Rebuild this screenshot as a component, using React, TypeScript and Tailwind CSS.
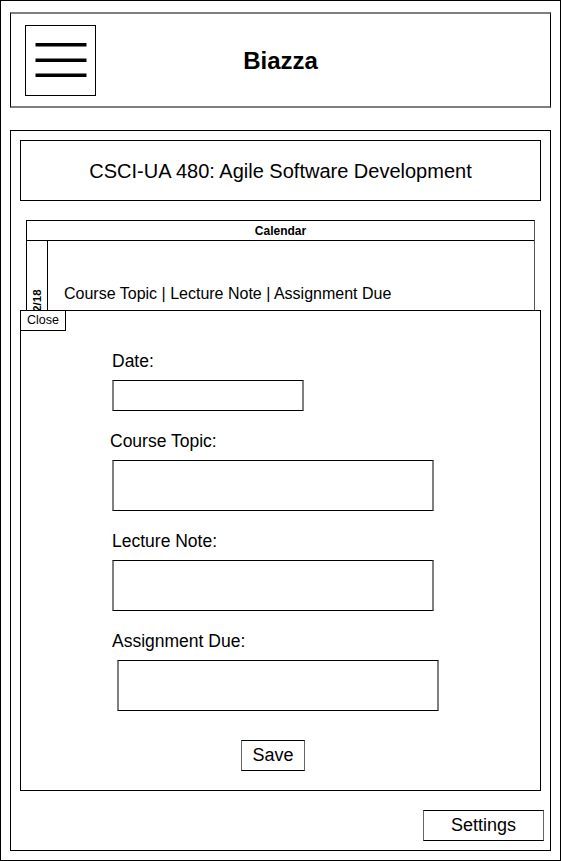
import React, { useState } from "react";

const font = { fontFamily: '"Liberation Sans", Arial, sans-serif' };

const Field = ({
  label,
  labelClass,
  inputClass,
}: {
  label: string;
  labelClass: string;
  inputClass: string;
}) => (
  <div className="flex flex-col">
    <label className={`h-[20px] text-[17.5px] leading-[20px] text-black ${labelClass}`}>
      {label}
    </label>
    <input
      type="text"
      className={`mt-[9px] border-y border-y-black border-x-2 border-x-[#7f7f7f] bg-white outline-none ${inputClass}`}
    />
  </div>
);

const App = () => {
  const [open, setOpen] = useState(true);

  return (
    <div
      className="w-[561px] h-[861px] border border-black bg-white overflow-hidden text-black"
      style={font}
    >
      {/* header */}
      <div className="mt-[11px] ml-[9px] w-[541px] h-[96px] border-x border-x-black border-y-2 border-y-[#7f7f7f] px-[14px] py-[11px] grid grid-cols-[70px_1fr_70px] items-center">
        <button className="w-[71px] h-[71px] border border-black flex items-center justify-center">
          <svg width="52" height="36" viewBox="0 0 52 36">
            <rect x="0.5" y="0" width="51" height="3.5" fill="#000" />
            <rect x="0.5" y="15.5" width="51" height="3.5" fill="#000" />
            <rect x="0.5" y="30.5" width="51" height="3.5" fill="#000" />
          </svg>
        </button>
        <div className="text-center text-[24px] font-bold leading-none">Biazza</div>
        <div />
      </div>

      {/* main */}
      <div className="relative mt-[22px] ml-[9px] w-[541px] h-[721px] border border-black p-[9px] flex flex-col">
        <div className="h-[61px] border border-black flex items-center justify-center text-[20px]">
          CSCI-UA 480: Agile Software Development
        </div>

        <div className="mt-[19px] mx-[6px] border border-black border-r-[#555]">
          <div className="h-[20px] border-b border-black flex items-center justify-center text-[12px] font-bold">
            Calendar
          </div>
          <div className="flex h-[120px]">
            <div className="w-[21px] border-r border-black flex items-center justify-center">
              <span className="-rotate-90 whitespace-nowrap text-[11.5px] font-bold">2/18</span>
            </div>
            <div className="flex-1 pl-[16px] pt-[43px] text-[16px] leading-[19px]">
              Course Topic | Lecture Note | Assignment Due
            </div>
          </div>
        </div>

        <div className="mt-auto flex justify-end -mr-[3px]">
          <button className="w-[121px] h-[31px] border border-black border-x-[#666] text-[18px] flex items-center justify-center">
            Settings
          </button>
        </div>

        {open && (
          <div className="absolute top-[179px] left-[9px] w-[521px] h-[481px] border border-black bg-white">
            <button
              onClick={() => setOpen(false)}
              className="absolute -top-px -left-px w-[46px] h-[21px] border border-black bg-white text-[12.5px] leading-none flex items-center justify-center"
            >
              Close
            </button>
            <div className="pt-[40px] flex flex-col gap-[20px]">
              <Field label="Date:" labelClass="ml-[91px]" inputClass="ml-[91px] w-[192px] h-[31px]" />
              <Field label="Course Topic:" labelClass="ml-[89px]" inputClass="ml-[91px] w-[322px] h-[51px]" />
              <Field label="Lecture Note:" labelClass="ml-[91px]" inputClass="ml-[91px] w-[322px] h-[51px]" />
              <Field label="Assignment Due:" labelClass="ml-[91px]" inputClass="ml-[96px] w-[322px] h-[51px]" />
            </div>
            <div className="mt-[29px] ml-[220px]">
              <button className="w-[64px] h-[31px] border border-black border-x-[#666] text-[18px] flex items-center justify-center">
                Save
              </button>
            </div>
          </div>
        )}
      </div>
    </div>
  );
};

export default App;
